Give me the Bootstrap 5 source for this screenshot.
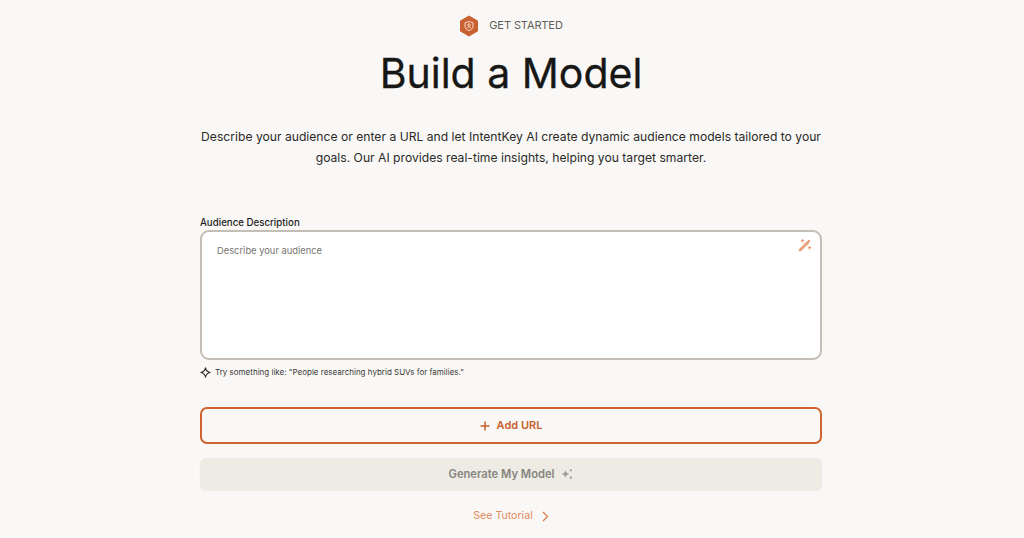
<!DOCTYPE html>
<html lang="en">
<head>
<meta charset="utf-8">
<title>Build a Model</title>
<link href="https://cdn.jsdelivr.net/npm/bootstrap@5.3.0/dist/css/bootstrap.min.css" rel="stylesheet">
<style>
html,body{height:538px;overflow:hidden}
body{background:#f9f8f6;font-family:Inter,"Liberation Sans",sans-serif;color:#1a1a18;padding-right:2px}
.page-wrap{width:622px;margin:0 auto;padding-top:15px}
.eyebrow{height:21px;gap:10px;font-size:11px;color:#5f5e5a;letter-spacing:-.1px}
.page-title{font-size:41px;font-weight:400;line-height:56px;margin:9px 0 0;color:#171715;-webkit-text-stroke:.3px #171715}
.intro{font-size:12.15px;line-height:21px;margin:25px -2px 0;color:#2b2a27}
.field-label{font-size:9.7px;line-height:12px;font-weight:500;margin:49px 0 1px;display:block;color:#1f1e1c}
.desc-box{height:130px;background:#fff;border:2px solid #c3bfb6;border-radius:9px;padding:12px 15px}
.desc-box textarea{width:100%;height:100%;border:0;outline:0;resize:none;background:transparent;padding:0;font-size:9.35px;line-height:14px;color:#55544f}
.desc-box textarea::placeholder{color:#77756f;opacity:1}
.wand{position:absolute;right:8px;top:6px}
.hint{font-size:8px;line-height:12px;color:#3b3a37;gap:4px;margin-top:6px}
.btn-url{height:37px;margin-top:29px;border:2px solid #d0632f;border-radius:7px;color:#c8602f;font-size:11px;font-weight:600;gap:7px;background:transparent}
.btn-url:hover{color:#c8602f;border-color:#d0632f}
.btn-gen{height:32px;margin-top:14px;border:0;border-radius:6px;background:#edebe3;color:#85847f;font-size:11.2px;font-weight:600;gap:7px;box-shadow:0 1px 2px rgba(0,0,0,.06)}
.btn-gen:disabled{background:#edebe3;color:#85847f;opacity:1}
.tutorial{margin-top:19px;font-size:10.6px;line-height:14px;color:#e58a5a;text-decoration:none;gap:9px}
</style>
</head>
<body>
<main class="page-wrap">
  <div class="eyebrow d-flex justify-content-center align-items-center">
    <svg width="20" height="22" viewBox="0 0 20 22" aria-hidden="true">
      <path d="M10 .5 19 5.700v10.600l-9 5.200-9-5.200V5.700z" fill="#c8602f"/>
      <path d="M10 6.500l4 1.300v3.200c0 2.300-1.600 3.800-4 4.600-2.400-.8-4-2.300-4-4.600V7.800z" fill="none" stroke="#f7dccd" stroke-width="1"/>
      <circle cx="10" cy="10" r="1.200" fill="none" stroke="#f7dccd" stroke-width=".9"/>
      <path d="M7.800 13.400c.6-1 1.300-1.400 2.200-1.400s1.600.4 2.200 1.400" fill="none" stroke="#f7dccd" stroke-width=".9"/>
    </svg>
    <span>GET STARTED</span>
  </div>
  <h1 class="page-title text-center">Build a Model</h1>
  <p class="intro text-center">Describe your audience or enter a URL and let IntentKey AI create dynamic audience models tailored to your goals. Our AI provides real-time insights, helping you target smarter.</p>
  <label class="field-label" for="aud">Audience Description</label>
  <div class="desc-box position-relative">
    <textarea id="aud" placeholder="Describe your audience"></textarea>
    <svg class="wand" width="14" height="14" viewBox="0 0 14 14" aria-hidden="true">
      <path d="M2.200 12 9.500 4.700" stroke="#eaa27c" stroke-width="3" stroke-linecap="round"/>
      <path d="M11 1.800l1.300 1.300-1.700 1.700-1.300-1.300z" fill="#e58a5a"/>
      <path d="M4.500 1v3.400M2.800 2.700h3.400M11.500 8v3.400M9.800 9.700h3.400" stroke="#eaa27c" stroke-width="1.200"/>
    </svg>
  </div>
  <div class="hint d-flex align-items-center">
    <svg width="11" height="11" viewBox="0 0 12 12" aria-hidden="true"><path d="M6 1c.5 2.900 2 4.400 5 5-3 .6-4.500 2.100-5 5-.5-2.900-2-4.400-5-5 3-.6 4.500-2.100 5-5z" fill="none" stroke="#2b2a27" stroke-width="1.200" stroke-linejoin="round"/></svg>
    <span>Try something like: "People researching hybrid SUVs for families."</span>
  </div>
  <button type="button" class="btn btn-url w-100 d-flex justify-content-center align-items-center p-0">
    <svg width="10" height="10" viewBox="0 0 10 10" aria-hidden="true"><path d="M5 .5v9M.5 5h9" stroke="#c8602f" stroke-width="1.500"/></svg>
    <span>Add URL</span>
  </button>
  <button type="button" class="btn btn-gen w-100 d-flex justify-content-center align-items-center p-0" disabled>
    <span>Generate My Model</span>
    <svg width="12" height="12" viewBox="0 0 12 12" aria-hidden="true"><path d="M4.500 2c.3 2.300 1.400 3.500 4 4-2.600.5-3.700 1.700-4 4-.3-2.300-1.400-3.500-4-4 2.600-.5 3.700-1.700 4-4z" fill="#9a9892"/><circle cx="9.800" cy="2.300" r="1.100" fill="#9a9892"/><circle cx="9.800" cy="9.700" r="1.100" fill="#9a9892"/></svg>
  </button>
  <div class="d-flex justify-content-center">
    <a href="#" class="tutorial d-inline-flex align-items-center">
      <span>See Tutorial</span>
      <svg width="7" height="11" viewBox="0 0 7 11" aria-hidden="true"><path d="M1 1l4.500 4.500L1 10" fill="none" stroke="#d97a4a" stroke-width="1.200"/></svg>
    </a>
  </div>
</main>
<script src="https://cdn.jsdelivr.net/npm/bootstrap@5.3.0/dist/js/bootstrap.bundle.min.js"></script>
</body>
</html>
